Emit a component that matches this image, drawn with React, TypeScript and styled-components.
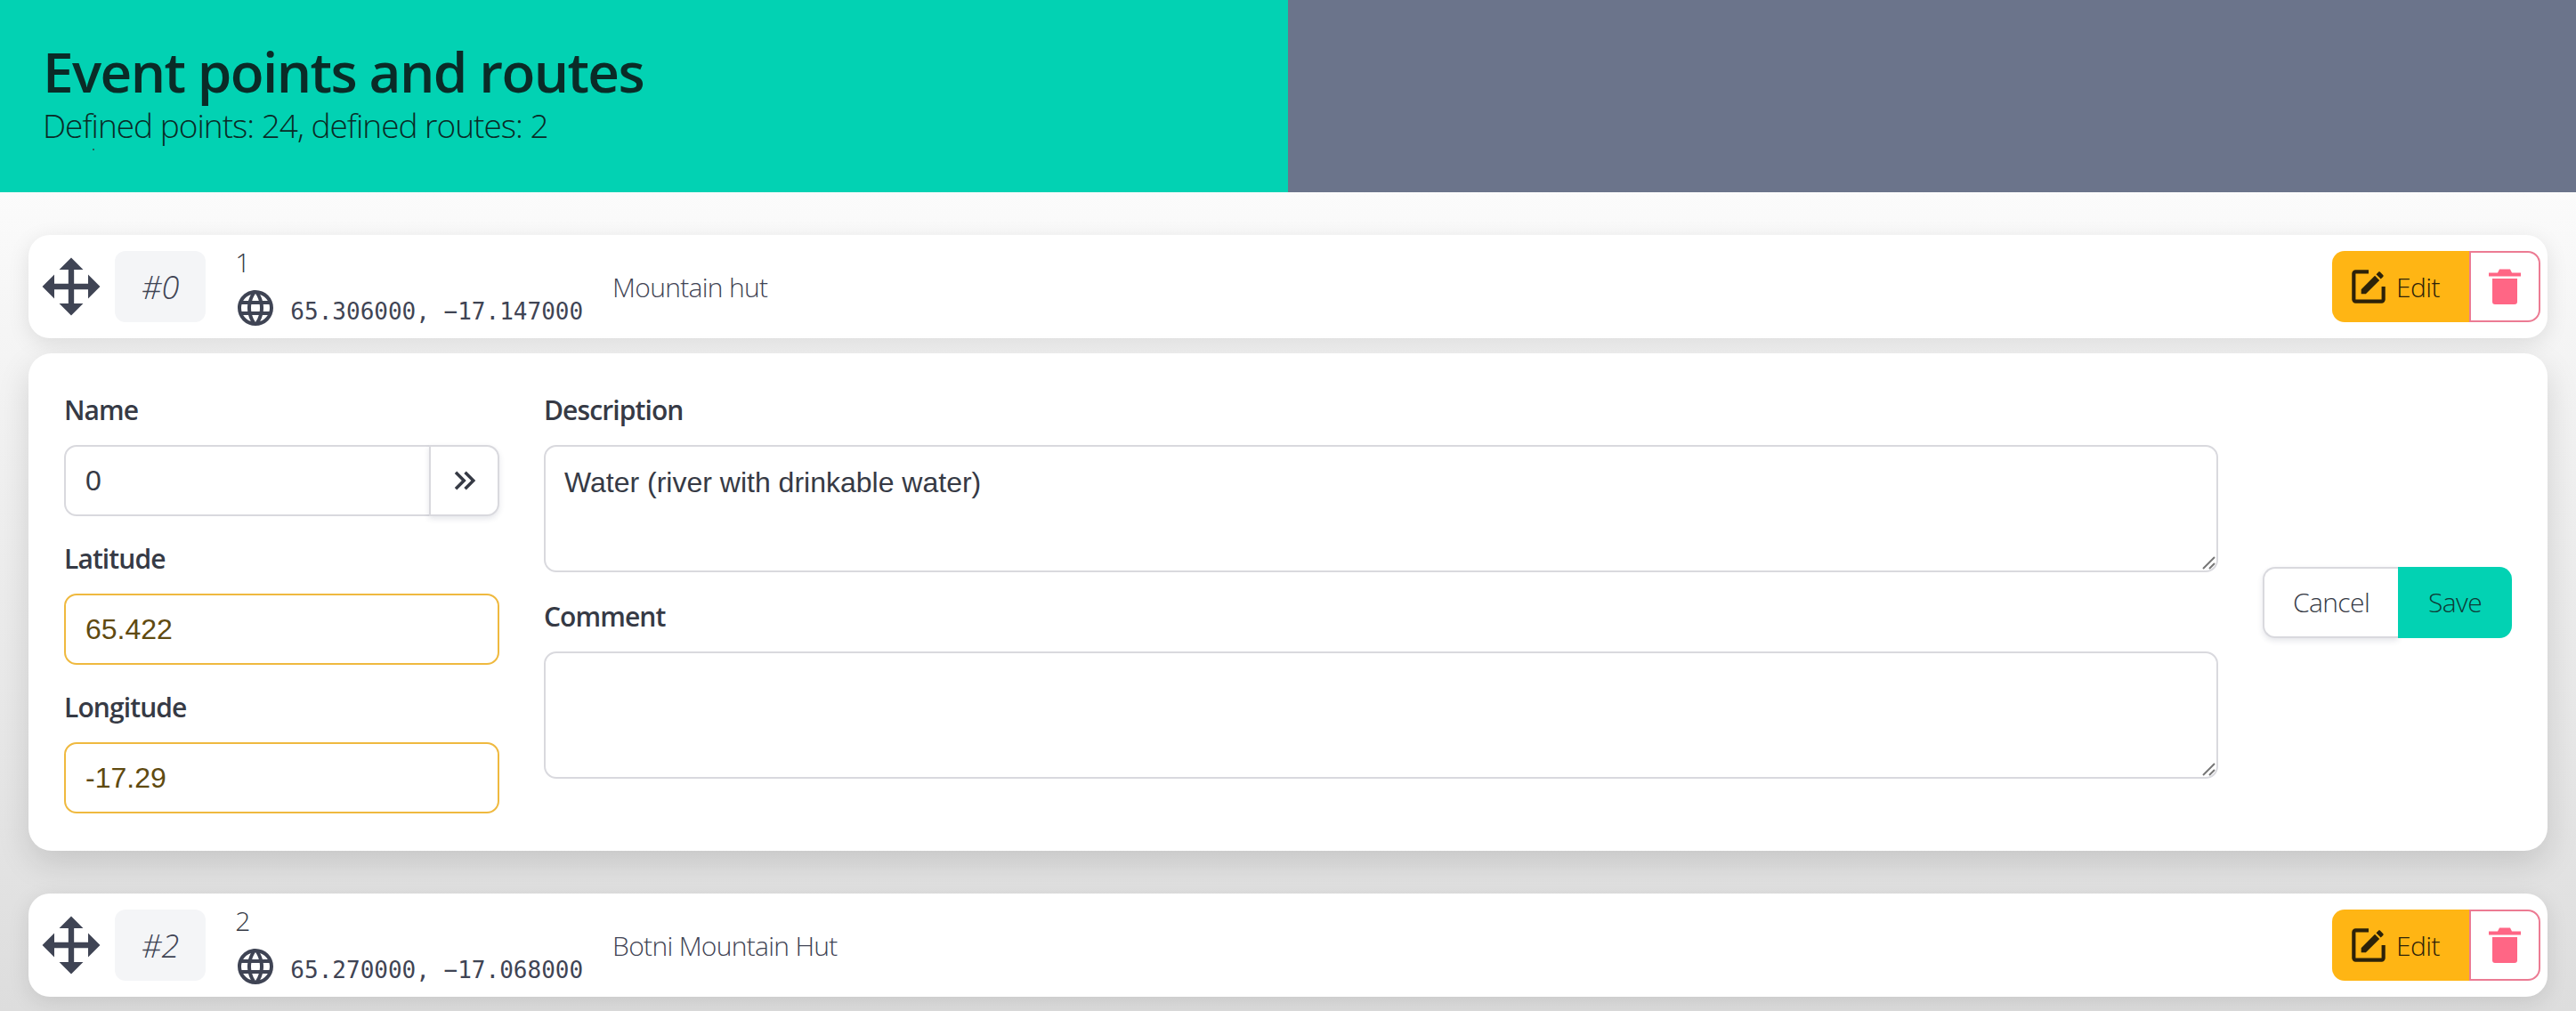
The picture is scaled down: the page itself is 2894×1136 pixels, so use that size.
import React from "react";
import styled, { createGlobalStyle } from "styled-components";

const FONT = `"Open Sans", "Noto Sans", "Liberation Sans", sans-serif`;

const Global = createGlobalStyle`
  html, body { margin: 0; padding: 0; height: 1136px; overflow: hidden; }
  body { font-family: ${FONT}; color: #363a45; background: #e4e4e4; }
  * { box-sizing: border-box; }
`;

const Page = styled.div`
  width: 2894px;
  height: 1136px;
  overflow: hidden;
  background: linear-gradient(180deg, #fbfbfb 216px, #f4f4f4 400px, #e8e8e8 800px, #dddddd 1136px);
`;

const Hero = styled.header`
  display: flex;
  height: 216px;
`;

const HeroMain = styled.div`
  position: relative;
  flex: 0 0 1447px;
  background: #02d2b3;
  padding: 42px 48px 0;
  color: #0a2b27;
`;

const HeroSide = styled.div`
  flex: 1;
  background: #6b748b;
`;

const Title = styled.h1`
  margin: 0;
  font-size: 62px;
  line-height: 76px;
  font-weight: 600;
  letter-spacing: -1.6px;
`;

const Subtitle = styled.p`
  margin: 0;
  font-size: 37px;
  line-height: 46px;
  font-weight: 300;
  letter-spacing: -1px;
`;

const Speck = styled.i`
  position: absolute;
  left: 104px;
  top: 167px;
  width: 2px;
  height: 2px;
  background: #27655c;
`;

const Main = styled.main`
  display: flex;
  flex-direction: column;
  padding: 48px 32px 0;
`;

const Row = styled.section<{ $gapBelow: number }>`
  display: flex;
  align-items: center;
  height: 116px;
  flex: none;
  margin-bottom: ${(p) => p.$gapBelow}px;
  padding: 0 8px 0 10px;
  background: #fff;
  border-radius: 24px;
  box-shadow: 0 6px 24px rgba(0, 0, 0, 0.1);
  font-weight: 300;
`;

const Handle = styled.svg`
  width: 76px;
  height: 76px;
  flex: none;
  fill: #3f4454;
`;

const IndexBox = styled.div`
  display: flex;
  align-items: center;
  justify-content: center;
  height: 80px;
  margin: 0 32px 0 11px;
  padding: 0 30px;
  background: #f4f5f7;
  border-radius: 12px;
  font-size: 36px;
  font-style: italic;
  font-weight: 300;
  color: #3f4454;
`;

const Info = styled.div`
  display: flex;
  flex-direction: column;
`;

const Num = styled.div`
  height: 48px;
  font-size: 30px;
  line-height: 42px;
  padding-left: 1px;
`;

const Coords = styled.div`
  display: flex;
  align-items: center;
  height: 48px;
  gap: 15px;
`;

const GlobeIcon = styled.svg`
  width: 48px;
  height: 48px;
  flex: none;
  fill: #3f4454;
`;

const Mono = styled.span`
  font-family: "DejaVu Sans Mono", "Liberation Mono", monospace;
  font-size: 26px;
  font-weight: 400;
  color: #3f4454;
  padding-top: 8px;
  white-space: pre;
`;

const PlaceName = styled.div`
  margin-left: 33px;
  font-size: 30px;
  letter-spacing: -0.7px;
  color: #3f4454;
`;

const Actions = styled.div`
  display: flex;
  margin-left: auto;
`;

const EditButton = styled.button`
  display: flex;
  align-items: center;
  gap: 6px;
  width: 154px;
  height: 80px;
  padding: 0 0 0 16px;
  border: 0;
  border-radius: 14px 0 0 14px;
  background: #ffb514;
  color: #2c2209;
  font: 300 30px ${FONT};
  letter-spacing: -0.6px;
  svg { width: 50px; height: 50px; fill: #2c2209; flex: none; }
`;

const TrashButton = styled.button`
  display: flex;
  align-items: center;
  justify-content: center;
  width: 80px;
  height: 80px;
  padding: 0;
  background: #fff;
  border: 2px solid #ec7b93;
  border-radius: 0 14px 14px 0;
  svg { width: 36px; height: 40px; fill: #ff6685; }
`;

const EditCard = styled.section`
  display: flex;
  gap: 50px;
  flex: none;
  margin-bottom: 48px;
  padding: 40px;
  height: 559px;
  background: #fff;
  border-radius: 26px;
  box-shadow: 0 14px 36px rgba(0, 0, 0, 0.13);
`;

const LeftCol = styled.div`
  flex: 0 0 489px;
  display: flex;
  flex-direction: column;
  gap: 24px;
`;

const MidCol = styled.div`
  flex: 1;
  display: flex;
  flex-direction: column;
  gap: 26px;
`;

const SideCol = styled.div`
  display: flex;
  align-items: center;
`;

const Field = styled.div`
  display: flex;
  flex-direction: column;
`;

const Label = styled.label`
  display: block;
  height: 48px;
  margin-bottom: 15px;
  font-size: 30px;
  line-height: 48px;
  font-weight: 600;
  letter-spacing: -0.9px;
  color: #363a45;
`;

const TextInput = styled.input<{ $changed?: boolean; $joined?: boolean }>`
  display: block;
  width: 100%;
  min-width: 0;
  height: 80px;
  padding: 0 22px;
  font: 32px "Liberation Sans", Arial, sans-serif;
  outline: none;
  background: #fff;
  color: ${(p) => (p.$changed ? "#5f4a10" : "#363a45")};
  border: 2px solid ${(p) => (p.$changed ? "#efb93f" : "#d9d9de")};
  border-radius: ${(p) => (p.$joined ? "14px 0 0 14px" : "14px")};
`;

const Joined = styled.div`
  display: flex;
`;

const ChevronButton = styled.button`
  display: flex;
  align-items: center;
  justify-content: center;
  flex: 0 0 79px;
  height: 80px;
  padding: 0;
  margin-left: -2px;
  background: #fff;
  border: 2px solid #d9d9de;
  border-radius: 0 14px 14px 0;
  box-shadow: 0 3px 6px rgba(40, 50, 80, 0.12);
  svg { width: 42px; height: 42px; fill: #363a45; }
`;

const AreaWrap = styled.div`
  position: relative;
`;

const Area = styled.textarea`
  display: block;
  width: 100%;
  height: 143px;
  padding: 21px;
  resize: none;
  outline: none;
  color: #363a45;
  font: 32px/38px "Liberation Sans", Arial, sans-serif;
  background: #fff;
  border: 2px solid #d9d9de;
  border-radius: 14px;
`;

const Grip = styled.svg`
  position: absolute;
  right: 3px;
  bottom: 3px;
  width: 16px;
  height: 16px;
  stroke: #777;
  stroke-width: 2;
  fill: none;
`;

const FormButtons = styled.div`
  display: flex;
`;

const CancelButton = styled.button`
  width: 152px;
  height: 80px;
  padding: 0;
  background: #fff;
  border: 2px solid #d9d9de;
  border-right: 0;
  border-radius: 14px 0 0 14px;
  box-shadow: 0 3px 6px rgba(40, 50, 80, 0.12);
  color: #363a45;
  font: 300 30px ${FONT};
  letter-spacing: -0.6px;
`;

const SaveButton = styled.button`
  width: 128px;
  height: 80px;
  padding: 0;
  background: #02d2b3;
  border: 0;
  border-radius: 0 14px 14px 0;
  color: #0e3a35;
  font: 300 30px ${FONT};
  letter-spacing: -0.6px;
`;

const MOVE = "M13,6V11H18V7.75L22.25,12L18,16.25V13H13V18H16.25L12,22.25L7.75,18H11V13H6V16.25L1.75,12L6,7.75V11H11V6H7.75L12,1.75L16.25,6H13Z";
const WEB = "M16.36,14C16.44,13.34 16.5,12.68 16.5,12C16.5,11.32 16.44,10.66 16.36,10H19.74C19.9,10.64 20,11.31 20,12C20,12.69 19.9,13.36 19.74,14M14.59,19.56C15.19,18.45 15.65,17.25 15.97,16H18.92C17.96,17.65 16.43,18.93 14.59,19.56M14.34,14H9.66C9.56,13.34 9.5,12.68 9.5,12C9.5,11.32 9.56,10.65 9.66,10H14.34C14.43,10.65 14.5,11.32 14.5,12C14.5,12.68 14.43,13.34 14.34,14M12,19.96C11.17,18.76 10.5,17.43 10.09,16H13.91C13.5,17.43 12.83,18.76 12,19.96M8,8H5.08C6.03,6.34 7.57,5.06 9.4,4.44C8.8,5.55 8.35,6.75 8,8M5.08,16H8C8.35,17.25 8.8,18.45 9.4,19.56C7.57,18.93 6.03,17.65 5.08,16M4.26,14C4.1,13.36 4,12.69 4,12C4,11.31 4.1,10.64 4.26,10H7.64C7.56,10.66 7.5,11.32 7.5,12C7.5,12.68 7.56,13.34 7.64,14M12,4.03C12.83,5.23 13.5,6.57 13.91,8H10.09C10.5,6.57 11.17,5.23 12,4.03M18.92,8H15.97C15.65,6.75 15.19,5.55 14.59,4.44C16.43,5.07 17.96,6.34 18.92,8M12,2C6.47,2 2,6.5 2,12A10,10 0 0,0 12,22A10,10 0 0,0 22,12A10,10 0 0,0 12,2Z";
const EDIT = "M5,3C3.89,3 3,3.89 3,5V19A2,2 0 0,0 5,21H19A2,2 0 0,0 21,19V12H19V19H5V5H12V3H5M17.78,4C17.61,4 17.43,4.07 17.3,4.2L16.08,5.41L18.58,7.91L19.8,6.7C20.06,6.44 20.06,6 19.8,5.75L18.25,4.2C18.12,4.07 17.95,4 17.78,4M15.37,6.12L8,13.5V16H10.5L17.87,8.62L15.37,6.12Z";
const DOUBLE = "M5.59,7.41L7,6L13,12L7,18L5.59,16.59L10.17,12L5.59,7.41M11.59,7.41L13,6L19,12L13,18L11.59,16.59L16.17,12L11.59,7.41Z";

const Icon = ({ d }: { d: string }) => (
  <svg viewBox="0 0 24 24">
    <path d={d} />
  </svg>
);

const PointRow = ({
  index,
  num,
  lat,
  lon,
  name,
  gapBelow,
}: {
  index: string;
  num: string;
  lat: string;
  lon: string;
  name: string;
  gapBelow: number;
}) => (
  <Row $gapBelow={gapBelow}>
    <Handle viewBox="0 0 24 24">
      <path d={MOVE} />
    </Handle>
    <IndexBox>{index}</IndexBox>
    <Info>
      <Num>{num}</Num>
      <Coords>
        <GlobeIcon viewBox="0 0 24 24">
          <path d={WEB} />
        </GlobeIcon>
        <Mono>
          {lat}, {lon}
        </Mono>
      </Coords>
    </Info>
    <PlaceName>{name}</PlaceName>
    <Actions>
      <EditButton>
        <Icon d={EDIT} />
        Edit
      </EditButton>
      <TrashButton aria-label="Delete">
        <svg viewBox="0 0 36 40">
          <path d="M0 4.5H10L12 .5H24L26 4.5H36V8.5H0Z" />
          <path d="M4 11H32V37a3 3 0 0 1-3 3H7a3 3 0 0 1-3-3Z" />
        </svg>
      </TrashButton>
    </Actions>
  </Row>
);

const ResizeGrip = () => (
  <Grip viewBox="0 0 16 16">
    <path d="M2 15L15 2M9 15L15 9" />
  </Grip>
);

export default function App() {
  return (
    <Page>
      <Global />
      <Hero>
        <HeroMain>
          <Title>Event points and routes</Title>
          <Subtitle>Defined points: 24, defined routes: 2</Subtitle>
          <Speck />
        </HeroMain>
        <HeroSide />
      </Hero>
      <Main>
        <PointRow index="#0" num="1" lat="65.306000" lon="−17.147000" name="Mountain hut" gapBelow={17} />
        <EditCard>
          <LeftCol>
            <Field>
              <Label>Name</Label>
              <Joined>
                <TextInput $joined readOnly value="0" />
                <ChevronButton aria-label="Next">
                  <Icon d={DOUBLE} />
                </ChevronButton>
              </Joined>
            </Field>
            <Field>
              <Label>Latitude</Label>
              <TextInput $changed readOnly value="65.422" />
            </Field>
            <Field>
              <Label>Longitude</Label>
              <TextInput $changed readOnly value="-17.29" />
            </Field>
          </LeftCol>
          <MidCol>
            <Field>
              <Label>Description</Label>
              <AreaWrap>
                <Area readOnly value="Water (river with drinkable water)" />
                <ResizeGrip />
              </AreaWrap>
            </Field>
            <Field>
              <Label>Comment</Label>
              <AreaWrap>
                <Area readOnly value="" />
                <ResizeGrip />
              </AreaWrap>
            </Field>
          </MidCol>
          <SideCol>
            <FormButtons>
              <CancelButton>Cancel</CancelButton>
              <SaveButton>Save</SaveButton>
            </FormButtons>
          </SideCol>
        </EditCard>
        <PointRow index="#2" num="2" lat="65.270000" lon="−17.068000" name="Botni Mountain Hut" gapBelow={0} />
      </Main>
    </Page>
  );
}
